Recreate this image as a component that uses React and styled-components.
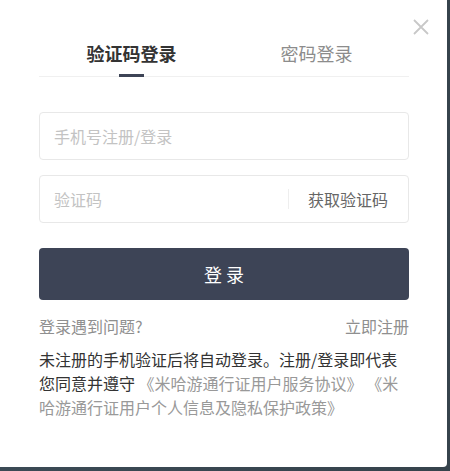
import styled, { createGlobalStyle } from "styled-components";
import { useState } from "react";

const GlobalStyle = createGlobalStyle`
  html, body {
    margin: 0;
    padding: 0;
    background: #3a4751;
    font-family: "Noto Sans CJK SC", "Noto Sans", sans-serif;
  }
  * {
    box-sizing: border-box;
  }
`;

const Page = styled.div`
  width: 450px;
  height: 471px;
  background: linear-gradient(90deg, #3b4a55 0%, #36434c 100%);
  overflow: hidden;
`;

const Card = styled.div`
  position: relative;
  width: 447px;
  height: 467px;
  background: #ffffff;
  border-radius: 0 0 4px 0;
  padding: 29px 38px 0 39px;
`;

const Close = styled.button`
  position: absolute;
  top: 19px;
  right: 18px;
  width: 16px;
  height: 16px;
  padding: 0;
  border: none;
  background: none;
  cursor: pointer;
  display: flex;
`;

const TabBar = styled.div`
  display: flex;
  border-bottom: 1px solid #f0f0f0;
`;

const Tab = styled.div`
  position: relative;
  flex: 1;
  height: 47px;
  display: flex;
  align-items: center;
  justify-content: center;
  font-size: 18px;
  color: ${(p) => (p.$active ? "#333333" : "#8c8c8c")};
  font-weight: ${(p) => (p.$active ? 700 : 400)};
  cursor: pointer;

  &::after {
    content: "";
    display: ${(p) => (p.$active ? "block" : "none")};
    position: absolute;
    left: 50%;
    bottom: -1px;
    width: 25px;
    height: 3px;
    margin-left: -12.5px;
    background: #3d4456;
  }
`;

const Form = styled.div`
  display: flex;
  flex-direction: column;
  gap: 15px;
  margin-top: 35px;
`;

const Field = styled.div`
  height: 48px;
  display: flex;
  align-items: center;
  border: 1px solid #e8e8e8;
  border-radius: 4px;
  padding: 0 20px 0 12px;
`;

const Input = styled.input`
  flex: 1;
  min-width: 0;
  border: none;
  outline: none;
  font-family: inherit;
  font-size: 16px;
  color: #333;
  background: transparent;

  &::placeholder {
    color: #c3c3c3;
  }
`;

const Divider = styled.span`
  width: 1px;
  height: 20px;
  background: #eeeeee;
  margin-right: 19px;
`;

const CodeButton = styled.span`
  font-size: 16px;
  color: #666666;
  cursor: pointer;
`;

const Submit = styled.button`
  margin-top: 25px;
  width: 100%;
  height: 52px;
  border: none;
  border-radius: 4px;
  background: #3d4456;
  color: #ffffff;
  font-family: inherit;
  font-size: 18px;
  letter-spacing: 4px;
  text-indent: 4px;
  cursor: pointer;
`;

const LinkRow = styled.div`
  display: flex;
  justify-content: space-between;
  margin-top: 15px;
  font-size: 16px;
  line-height: 22px;
  color: #8f8f8f;
`;

const Agreement = styled.p`
  margin: 10px 0 0;
  font-size: 16px;
  line-height: 24px;
  color: #333333;
`;

const Docs = styled.span`
  color: #999999;
  cursor: pointer;
`;

export default function App() {
  const [tab, setTab] = useState(0);

  return (
    <Page>
      <GlobalStyle />
      <Card>
        <Close aria-label="关闭">
          <svg width="16" height="16" viewBox="0 0 16 16">
            <path d="M1 1 L15 15 M15 1 L1 15" stroke="#c8c8c8" strokeWidth="1.8" fill="none" />
          </svg>
        </Close>
        <TabBar>
          <Tab $active={tab === 0} onClick={() => setTab(0)}>验证码登录</Tab>
          <Tab $active={tab === 1} onClick={() => setTab(1)}>密码登录</Tab>
        </TabBar>
        <Form>
          <Field>
            <Input placeholder="手机号注册/登录" />
          </Field>
          <Field>
            <Input placeholder="验证码" />
            <Divider />
            <CodeButton>获取验证码</CodeButton>
          </Field>
        </Form>
        <Submit>登录</Submit>
        <LinkRow>
          <span>登录遇到问题?</span>
          <span>立即注册</span>
        </LinkRow>
        <Agreement>
          未注册的手机验证后将自动登录。注册/登录即代表您同意并遵守
          <Docs> 《米哈游通行证用户服务协议》 《米哈游通行证用户个人信息及隐私保护政策》</Docs>
        </Agreement>
      </Card>
    </Page>
  );
}
